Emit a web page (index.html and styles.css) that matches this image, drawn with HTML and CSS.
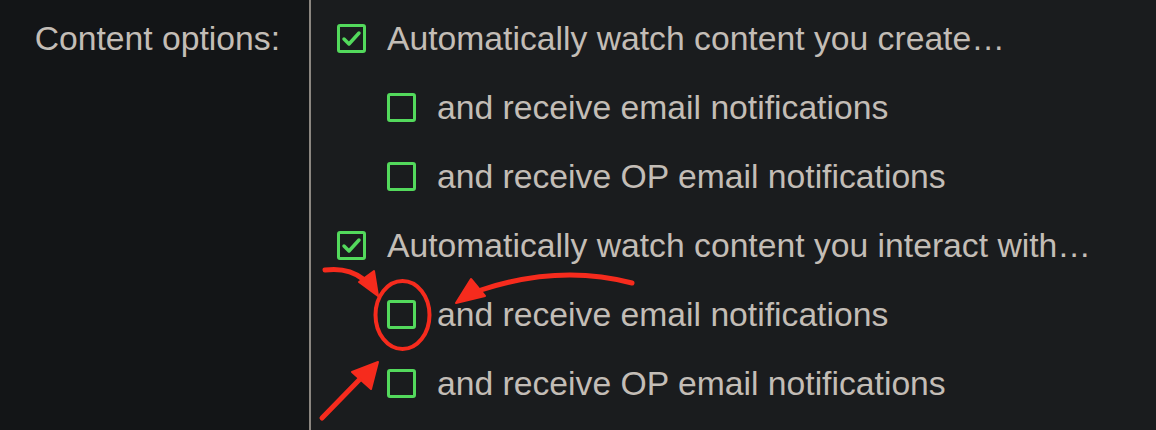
FILE: index.html
```html
<HTML>
   <HEAD>
      <TITLE>Content options</TITLE>
      <link rel="stylesheet" href="styles.css">
   </HEAD>
   <BODY>
      <DIV class='Settings'>
         <DIV class='Label'>Content options:</DIV>
         <DIV class='Options'>
            <DIV class='Option'>
               <SPAN class='Box'><svg viewBox='0 0 23 23'><polyline points='4,12 9,17 19,6'/></svg></SPAN>
               Automatically watch content you create…
            </DIV>
            <DIV class='Option Sub'><SPAN class='Box'></SPAN>and receive email notifications</DIV>
            <DIV class='Option Sub'><SPAN class='Box'></SPAN>and receive OP email notifications</DIV>
            <DIV class='Option'>
               <SPAN class='Box'><svg viewBox='0 0 23 23'><polyline points='4,12 9,17 19,6'/></svg></SPAN>
               Automatically watch content you interact with…
            </DIV>
            <DIV class='Option Sub'><SPAN class='Box'></SPAN>and receive email notifications</DIV>
            <DIV class='Option Sub'><SPAN class='Box'></SPAN>and receive OP email notifications</DIV>
         </DIV>
      </DIV>
      <!-- red markup drawn over the screenshot -->
      <svg class='Markup' width='1156' height='430' viewBox='0 0 1156 430'>
         <path d='M325 270 Q348 267 363 279'/>
         <polygon points='359,282 374,271 378,296'/>
         <ellipse cx='402.5' cy='315' rx='27' ry='34'/>
         <path d='M632 283 Q560 264 481 290'/>
         <polygon points='456,303 471,279 485,296'/>
         <path d='M322 418 L361 378'/>
         <polygon points='378,362 352,372 371,389'/>
      </svg>
   </BODY>
</HTML>
```

FILE: styles.css
```css
BODY
{
   margin:      0;
   height:      430px;
   overflow:    hidden;
   background:  #1a1c1e;
   color:       #c3bdb6;
   font-family: 'Liberation Sans', Arial, sans-serif;
   font-size:   33.7px;
   position:    relative;
}
.Settings
{
   display:               grid;
   grid-template-columns: 311px 1fr;
   height:                430px;
}
.Label
{
   background:    #131517;
   border-right:  2px solid #8b8680;
   text-align:    right;
   padding-top:   4px;
   padding-right: 29px;
   line-height:   69px;
}
.Options
{
   padding-top:  4px;
   padding-left: 26px;
}
.Option
{
   display:     flex;
   align-items: center;
   height:      69px;
   white-space: nowrap;
}
.Sub
{
   padding-left: 50px;
}
.Box
{
   box-sizing:    border-box;
   width:         29px;
   height:        29px;
   border:        3px solid #53d95c;
   border-radius: 3px;
   margin-right:  21px;
   flex:          none;
}
.Box svg
{
   display: block;
   width:   23px;
   height:  23px;
}
.Box polyline
{
   fill:            none;
   stroke:          #53d95c;
   stroke-width:    3.5;
   stroke-linecap:  round;
   stroke-linejoin: round;
}
.Markup
{
   position:       absolute;
   left:           0;
   top:            0;
   pointer-events: none;
}
.Markup path, .Markup ellipse
{
   fill:           none;
   stroke:         #f62b1d;
   stroke-width:   5;
   stroke-linecap: round;
}
.Markup ellipse
{
   stroke-width: 4;
}
.Markup polygon
{
   fill:            #f62b1d;
   stroke:          #f62b1d;
   stroke-width:    2;
   stroke-linejoin: round;
}
```
